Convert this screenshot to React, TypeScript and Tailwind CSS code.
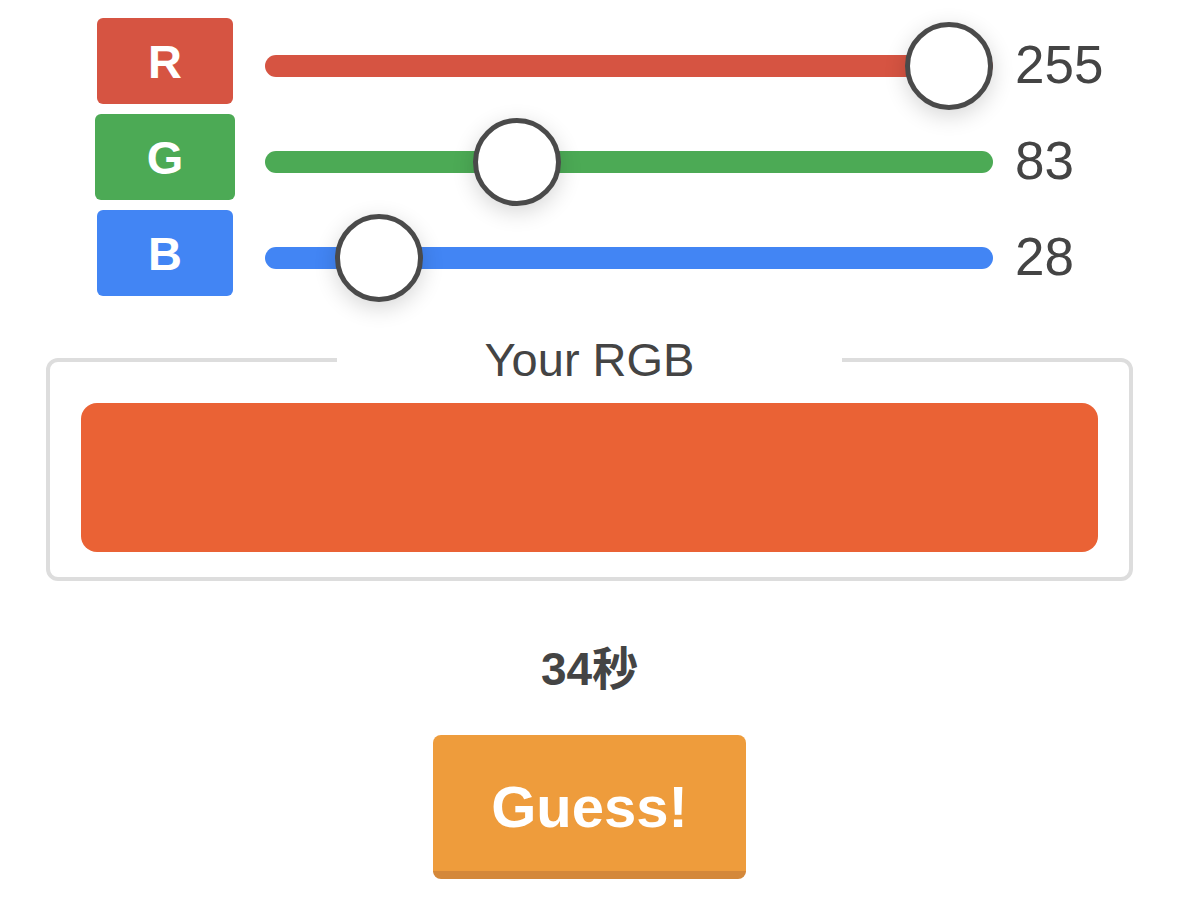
import { useState } from "react";

type Channel = {
  key: string;
  label: string;
  color: string;
  value: number;
};

const channels: Channel[] = [
  { key: "r", label: "R", color: "bg-[#d65442]", value: 255 },
  { key: "g", label: "G", color: "bg-[#4caa55]", value: 83 },
  { key: "b", label: "B", color: "bg-[#4285f4]", value: 28 },
];

function ColorSlider({ channel }: { channel: Channel }) {
  // thumb center travels from 44px to 684px across the 728px track
  const left = 44 + (channel.value / 255) * 640;
  return (
    <div className="relative h-[22px] w-[728px]">
      <div className={`h-full w-full rounded-full ${channel.color}`} />
      <div
        className="absolute top-1/2 h-[88px] w-[88px] -translate-x-1/2 -translate-y-1/2 rounded-full border-[5px] border-[#4a4a4a] bg-white shadow-[0_6px_22px_rgba(0,0,0,0.16)]"
        style={{ left }}
      />
    </div>
  );
}

export default function App() {
  const [values] = useState(channels);
  const [seconds] = useState(34);

  return (
    <div
      className="min-h-[898px] w-[1179px] bg-white pt-[18px] text-[#444]"
      style={{ fontFamily: '"Liberation Sans", "Noto Sans CJK JP", sans-serif' }}
    >
      <div className="flex flex-col gap-[10px] pl-[97px]">
        {values.map((channel) => (
          <div key={channel.key} className="flex h-[86px] items-center">
            <div
              className={`flex h-[86px] items-center justify-center rounded-md pt-[2px] text-[47px] font-bold text-white ${channel.color} ${
                channel.key === "g" ? "-mx-[2px] w-[140px]" : "w-[136px]"
              }`}
            >
              {channel.label}
            </div>
            <div className="ml-[32px] mt-[10px]">
              <ColorSlider channel={channel} />
            </div>
            <span className="ml-[22px] mt-[6px] text-[53px] leading-none">{channel.value}</span>
          </div>
        ))}
      </div>

      <fieldset className="mx-[46px] mt-[35px] rounded-xl border-4 border-[#dddddd] px-[31px] pb-[25px]">
        <legend className="mx-auto bg-white px-[148px] text-[47px] leading-[58px]">Your RGB</legend>
        <div className="mt-[14px] h-[149px] rounded-2xl bg-[#ea6235]" />
      </fieldset>

      <div className="mt-[64px] text-center text-[46px] font-bold leading-[48px]">{seconds}秒</div>

      <div className="mt-[42px] flex justify-center">
        <button className="flex h-[144px] w-[313px] items-center justify-center rounded-lg border-b-8 border-[#d4883a] bg-[#ee9c3c] pt-[6px] text-[58px] font-bold text-white">
          Guess!
        </button>
      </div>
    </div>
  );
}
